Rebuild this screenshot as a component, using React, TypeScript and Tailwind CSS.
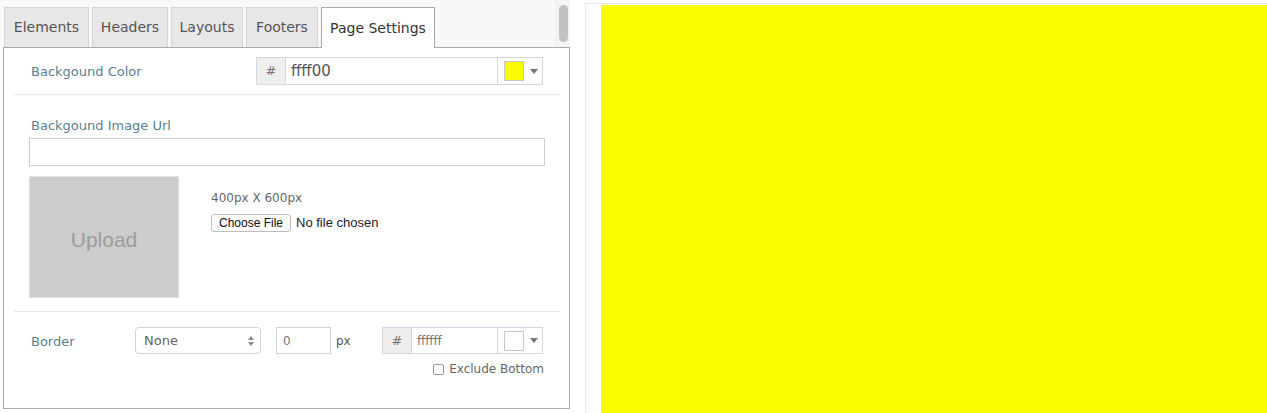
import React from "react";

const font = { fontFamily: '"DejaVu Sans", Verdana, sans-serif' };

function Caret() {
  return (
    <svg width="8" height="5" viewBox="0 0 8 5" className="block">
      <path d="M0 0 L8 0 L4 5 Z" fill="#777" />
    </svg>
  );
}

function ColorGroup({ value, swatch, small }: { value: string; swatch: string; small?: boolean }) {
  return (
    <div className={`flex ${small ? "h-[27px]" : "h-[28px]"} border border-[#cfd8e0] bg-white`}>
      <div className="w-[29px] flex items-center justify-center bg-[#eeeeee] border-r border-[#cfd8e0] text-[#777] text-[13px]">#</div>
      <div className={`flex-1 flex items-center pl-[5px] text-[#555] ${small ? "text-[12px] text-[#777]" : "text-[15px]"}`}>{value}</div>
      <div className="w-[45px] flex items-center gap-[6px] pl-[6px] border-l border-[#cfd8e0]">
        <div className="w-[20px] h-[20px] border border-[#c8c8c8]" style={{ background: swatch }} />
        <Caret />
      </div>
    </div>
  );
}

export default function App() {
  const tabs = [
    { label: "Elements", w: "w-[85px]" },
    { label: "Headers", w: "w-[76px]" },
    { label: "Layouts", w: "w-[72px]" },
    { label: "Footers", w: "w-[72px]" },
  ];
  return (
    <div className="flex h-[413px] w-[1267px] overflow-hidden bg-white" style={font}>
      {/* left */}
      <div className="w-[570px] flex flex-col bg-white">
        <div className="flex h-[47px] bg-[#f8f8f8]">
          <div className="flex-1 flex items-end gap-[3px] pl-[4px]">
            {tabs.map((t) => (
              <div
                key={t.label}
                className={`${t.w} h-[40px] flex items-center justify-center bg-[#e7e7e7] border border-b-0 border-[#d6d6d6] text-[#555] text-[14px]`}
              >
                {t.label}
              </div>
            ))}
            <div className="w-[114px] h-[41px] mb-[-1px] flex items-center justify-center bg-white border border-b-0 border-[#aaa] text-[#333] text-[14px] relative z-10">
              Page Settings
            </div>
          </div>
          <div className="w-[14px] border-l border-[#ececec] bg-[#f5f5f5] pt-[5px] flex justify-center">
            <div className="w-[9px] h-[37px] rounded-full bg-[#c2c2c2]" />
          </div>
        </div>
        <div className="ml-[3px] w-[567px] h-[362px] border border-[#aaaaaa] bg-white px-[10px]">
          {/* row 1 */}
          <div className="flex items-center h-[47px] border-b border-[#e8e8e8] pl-[17px] pr-[4px]">
            <div className="w-[225px] pt-[2px] text-[13px] text-[#5a7f8f]">Backgound Color</div>
            <div className="w-[287px]">
              <ColorGroup value="ffff00" swatch="#f9fc00" />
            </div>
          </div>
          {/* row 2 */}
          <div className="h-[217px] border-b border-[#e8e8e8] pl-[15px] pr-[14px] pt-[21px]">
            <div className="pl-[2px] text-[13px] text-[#5a7f8f] leading-[20px]">Backgound Image Url</div>
            <div className="mt-[2px] h-[28px] border border-[#cccccc]" />
            <div className="mt-[10px] flex">
              <div className="w-[150px] h-[122px] bg-[#cccccc] border border-[#e2e2e2] flex items-center justify-center pt-[6px] text-[21px] text-[#9c9c9c]" style={{ fontFamily: '"Liberation Sans", Arial, sans-serif' }}>
                Upload
              </div>
              <div className="ml-[32px] pt-[14px]">
                <div className="text-[12px] text-[#666] leading-[16px]">400px X 600px</div>
                <div className="mt-[7px] flex items-center gap-[5px]" style={{ fontFamily: '"Liberation Sans", Arial, sans-serif' }}>
                  <div className="h-[18px] px-[7px] flex items-center border border-[#bdbdbd] rounded-[3px] bg-[#fbfbfb] text-[12px] text-[#111]">
                    Choose File
                  </div>
                  <div className="text-[13px] text-[#222]">No file chosen</div>
                </div>
              </div>
            </div>
          </div>
          {/* row 3 */}
          <div className="pl-[17px] pr-[14px] pt-[15px]">
            <div className="flex items-center h-[27px]">
              <div className="w-[104px] pt-[2px] text-[13px] text-[#5a7f8f]">Border</div>
              <div className="w-[126px] h-[27px] border border-[#cad5de] rounded-[4px] flex items-center justify-between pl-[8px] pr-[6px] text-[13px] text-[#666]">
                <span>None</span>
                <svg width="6" height="10" viewBox="0 0 6 10">
                  <path d="M0 4 L3 0 L6 4 Z M0 6 L6 6 L3 10 Z" fill="#888" />
                </svg>
              </div>
              <div className="ml-[15px] w-[55px] h-[27px] border border-[#cad5de] flex items-center pl-[6px] text-[12px] text-[#777]">0</div>
              <div className="ml-[5px] w-[46px] text-[12px] text-[#555]">px</div>
              <div className="w-[161px]">
                <ColorGroup value="ffffff" swatch="#ffffff" small />
              </div>
            </div>
            <div className="flex justify-end items-center mt-[6px] pr-[1px] gap-[5px] text-[12px] text-[#666]">
              <div className="w-[11px] h-[11px] border border-[#999] rounded-[2px] bg-white" />
              <span>Exclude Bottom</span>
            </div>
          </div>
        </div>
      </div>
      {/* right */}
      <div className="ml-[15px] mt-[3px] flex-1 border-l border-t border-[#e8e8e8] pl-[15px] pt-[1px]">
        <div className="h-full bg-[#f9fc00]" />
      </div>
    </div>
  );
}
